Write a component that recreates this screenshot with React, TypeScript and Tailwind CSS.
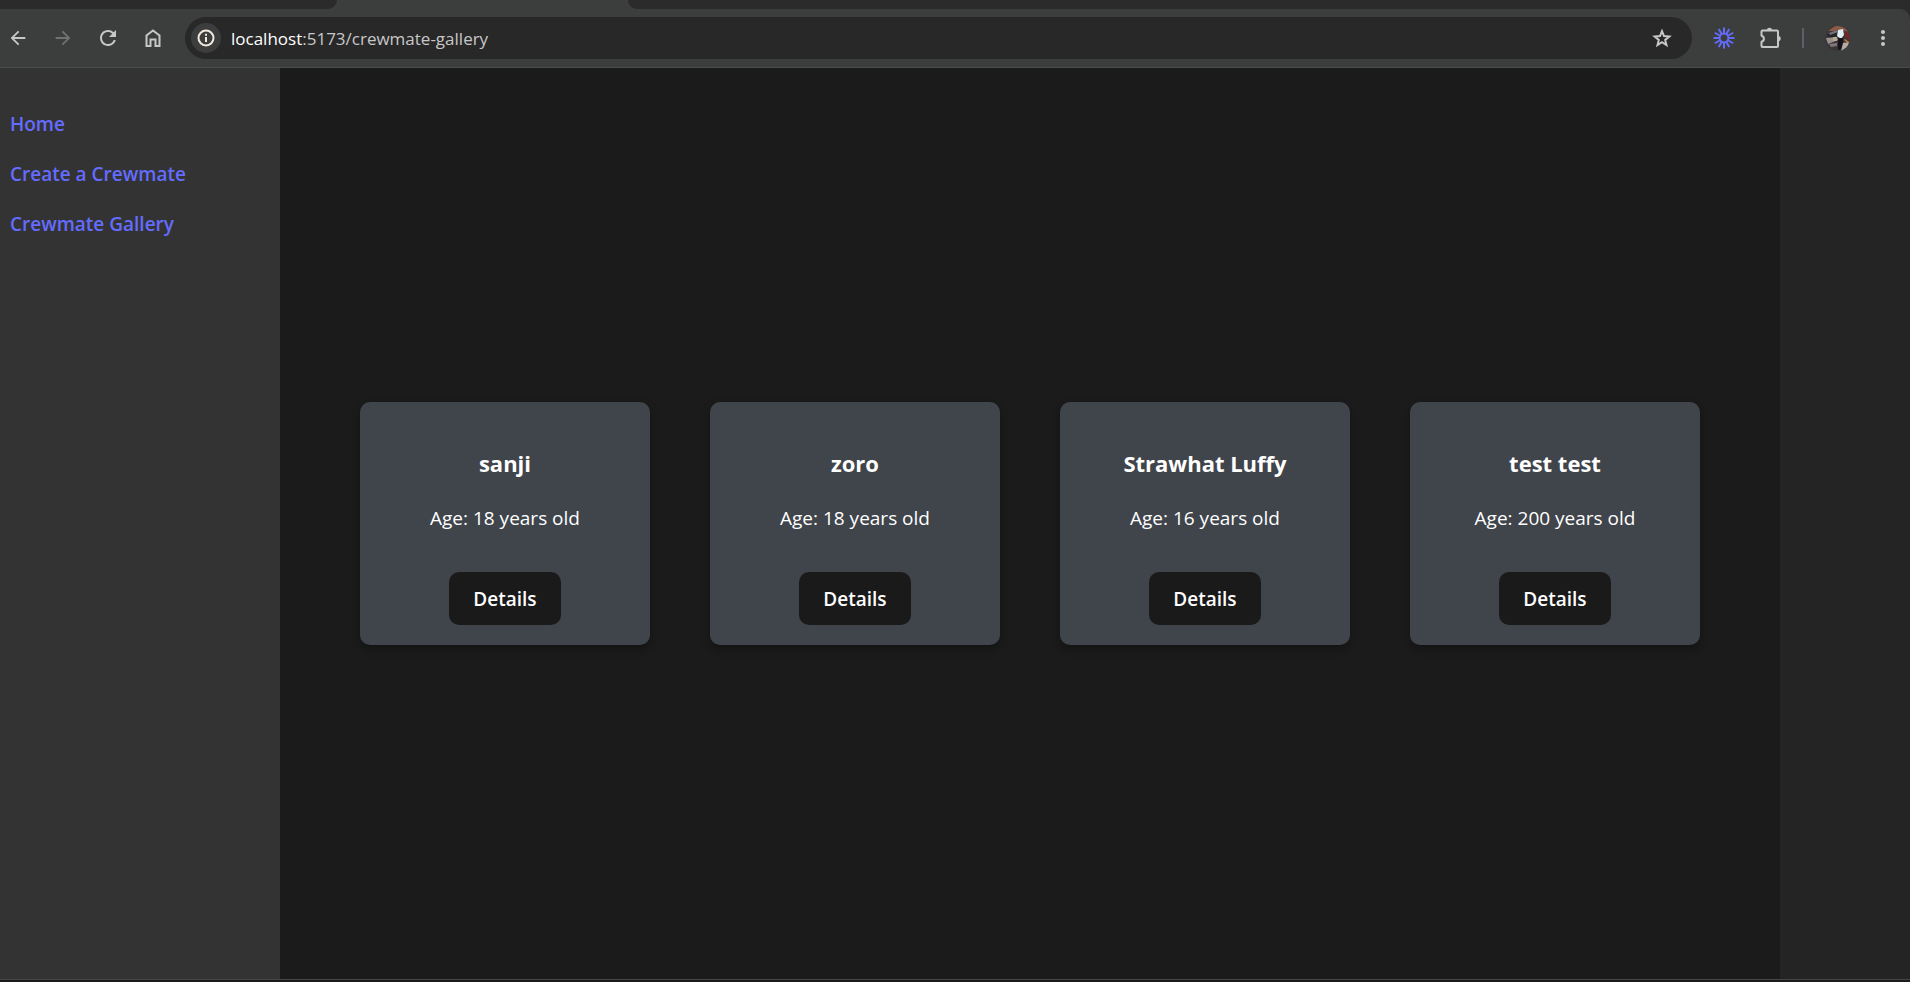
import type { ReactNode } from "react";
import { MdArrowBack, MdArrowForward, MdRefresh, MdMoreVert } from "react-icons/md";

type Crewmate = { name: string; age: number };

const crewmates: Crewmate[] = [
  { name: "sanji", age: 18 },
  { name: "zoro", age: 18 },
  { name: "Strawhat Luffy", age: 16 },
  { name: "test test", age: 200 },
];

const links = [
  { label: "Home", href: "#home" },
  { label: "Create a Crewmate", href: "#create" },
  { label: "Crewmate Gallery", href: "#gallery" },
];

const rays = Array.from({ length: 12 }, (_, i) => i * 30);

function BurstIcon() {
  return (
    <svg viewBox="-12 -12 24 24" className="size-6" fill="none" stroke="#646cff" strokeWidth="2">
      <circle r="4.4" />
      {rays.map((angle) => (
        <path key={angle} d="M0-5V-10.5" transform={`rotate(${angle})`} />
      ))}
    </svg>
  );
}

function OutlineIcon({ children }: { children: ReactNode }) {
  return (
    <svg viewBox="0 0 24 24" className="size-6" fill="none" stroke="currentColor" strokeWidth="2">
      {children}
    </svg>
  );
}

function HomeIcon() {
  return (
    <OutlineIcon>
      <path d="M5.5 20V9.5L12 4.4l6.500 5.100V20h-4v-6.500h-5V20z" />
    </OutlineIcon>
  );
}

function InfoIcon() {
  return (
    <OutlineIcon>
      <circle cx="12" cy="12" r="7.500" />
      <path d="M12 11v5M12 7.700v2" />
    </OutlineIcon>
  );
}

function StarIcon() {
  return (
    <OutlineIcon>
      <path d="M12 5.200l2 4.900 5.300.4-4.100 3.400 1.300 5.100-4.500-2.800-4.500 2.800 1.300-5.100-4.100-3.400 5.300-.4z" />
    </OutlineIcon>
  );
}

function ExtensionIcon() {
  return (
    <OutlineIcon>
      <path
        d="M5.500 4.500H20a1 1 0 0 1 1 1V20a1 1 0 0 1-1 1H5.500a1 1 0 0 1-1-1v-4.200c3.200-.9 3.200-5.200 0-6.100V5.500a1 1 0 0 1 1-1z"
        strokeLinejoin="round"
      />
      <path d="M10 4c0-3 5-3 5 0zM21.500 10c3 0 3 5.200 0 5.200z" fill="currentColor" stroke="none" />
    </OutlineIcon>
  );
}

function Avatar() {
  return (
    <svg viewBox="0 0 25 25" className="size-[25px] rounded-full">
      <rect width="25" height="25" fill="#3a3538" />
      <path d="M3 5L10 0h11l3 6-8-2-7 1z" fill="#8c5a46" />
      <path d="M2 9l10-5 3 5-10 3z" fill="#242429" />
      <path d="M4 7l8-3 1 2-8 3z" fill="#77747a" />
      <path d="M13 4l5-1 1 6-3 4-4-3z" fill="#dfeef3" />
      <path d="M19 5l6 2v8l-5-4z" fill="#6b2a2c" />
      <path d="M1 12l11-1 1 3-10 4z" fill="#98918f" />
      <path d="M8 11h4v4H8z" fill="#b9a78d" />
      <path d="M13 12h5v11l-5 1z" fill="#151519" />
      <path d="M18 17l6-1-2 9h-6z" fill="#b5aaa1" />
      <path d="M20 13l4 3-1 1-4-3z" fill="#c98243" />
      <path d="M4 18l8-1v3l-6 1z" fill="#817477" />
    </svg>
  );
}

function BrowserBar() {
  const iconButton = "flex size-6 items-center justify-center";
  return (
    <header className="bg-[#2b2b2b]">
      <div className="flex h-[9px] bg-[#3c3e3d]">
        <div className="w-[337px] rounded-br-[16px] bg-[#2b2b2b]" />
        <div className="w-[291px]" />
        <div className="grow rounded-bl-[16px] bg-[#2b2b2b]" />
      </div>
      <div className="flex h-[59px] items-center rounded-tr-[10px] border-b border-[#4a4c4b] bg-[#3c3e3d] pr-[15px] pl-[6px] text-[#c7c7c7]">
        <nav aria-label="Browser" className="flex gap-[21px]">
          <button aria-label="Back" className={iconButton}><MdArrowBack size={22} /></button>
          <button aria-label="Forward" className={`${iconButton} text-[#727074]`}><MdArrowForward size={22} /></button>
          <button aria-label="Reload" className={iconButton}><MdRefresh size={24} /></button>
          <button aria-label="Home page" className={iconButton}><HomeIcon /></button>
        </nav>
        <div className="ml-5 flex h-[42px] grow items-center rounded-full bg-[#282828] pr-[18px] pl-[6px]">
          <button aria-label="Site information" className="flex size-[30px] items-center justify-center rounded-full bg-[#3c3e3d] text-[#f2e9dc]">
            <InfoIcon />
          </button>
          <p className="grow pt-px pl-[10px] font-['Open_Sans','Noto_Sans',sans-serif] text-[17px] text-[#c7c7c7]">
            <span className="text-white">localhost</span>:5173/crewmate-gallery
          </p>
          <button aria-label="Bookmark" className={iconButton}><StarIcon /></button>
        </div>
        <div className="ml-5 flex items-center gap-[21px]">
          <button aria-label="Claude" className={iconButton}><BurstIcon /></button>
          <button aria-label="Extensions" className={iconButton}><ExtensionIcon /></button>
          <div className="h-5 w-[2px] bg-[#5f5f6b]" />
          <button aria-label="Profile"><Avatar /></button>
          <button aria-label="Menu" className={iconButton}><MdMoreVert size={26} /></button>
        </div>
      </div>
    </header>
  );
}

function CrewmateCard({ name, age }: Crewmate) {
  return (
    <article className="flex w-[290px] flex-col items-center rounded-[10px] bg-[#40444b] px-5 pt-[45px] pb-5 text-white shadow-[0_4px_8px_rgba(0,0,0,0.3)]">
      <h2 className="text-[22px] leading-8 font-bold">{name}</h2>
      <p className="mt-[23px] text-[19px] leading-8">Age: {age} years old</p>
      <button className="mt-[38px] h-[53px] w-28 rounded-[10px] bg-[#1a1a1a] pt-[2px] text-[19px] font-semibold">Details</button>
    </article>
  );
}

export default function App() {
  return (
    <div className="flex min-h-screen flex-col bg-[#1b1b1b] font-['Open_Sans','Noto_Sans',sans-serif]">
      <BrowserBar />
      <div className="flex grow border-b border-[#454545] bg-[#242424]">
        <nav aria-label="Main" className="flex w-[280px] shrink-0 flex-col gap-[18px] bg-[#333333] px-[10px] pt-10">
          {links.map((link) => (
            <a key={link.label} href={link.href} className="text-[19px] leading-8 font-semibold text-[#646cff]">{link.label}</a>
          ))}
        </nav>
        <main className="mr-[130px] flex grow flex-wrap content-center justify-center gap-[60px] bg-[#1b1b1b]">
          {crewmates.map((crewmate) => (
            <CrewmateCard key={crewmate.name} {...crewmate} />
          ))}
        </main>
      </div>
      <div className="h-[2px]" />
    </div>
  );
}
